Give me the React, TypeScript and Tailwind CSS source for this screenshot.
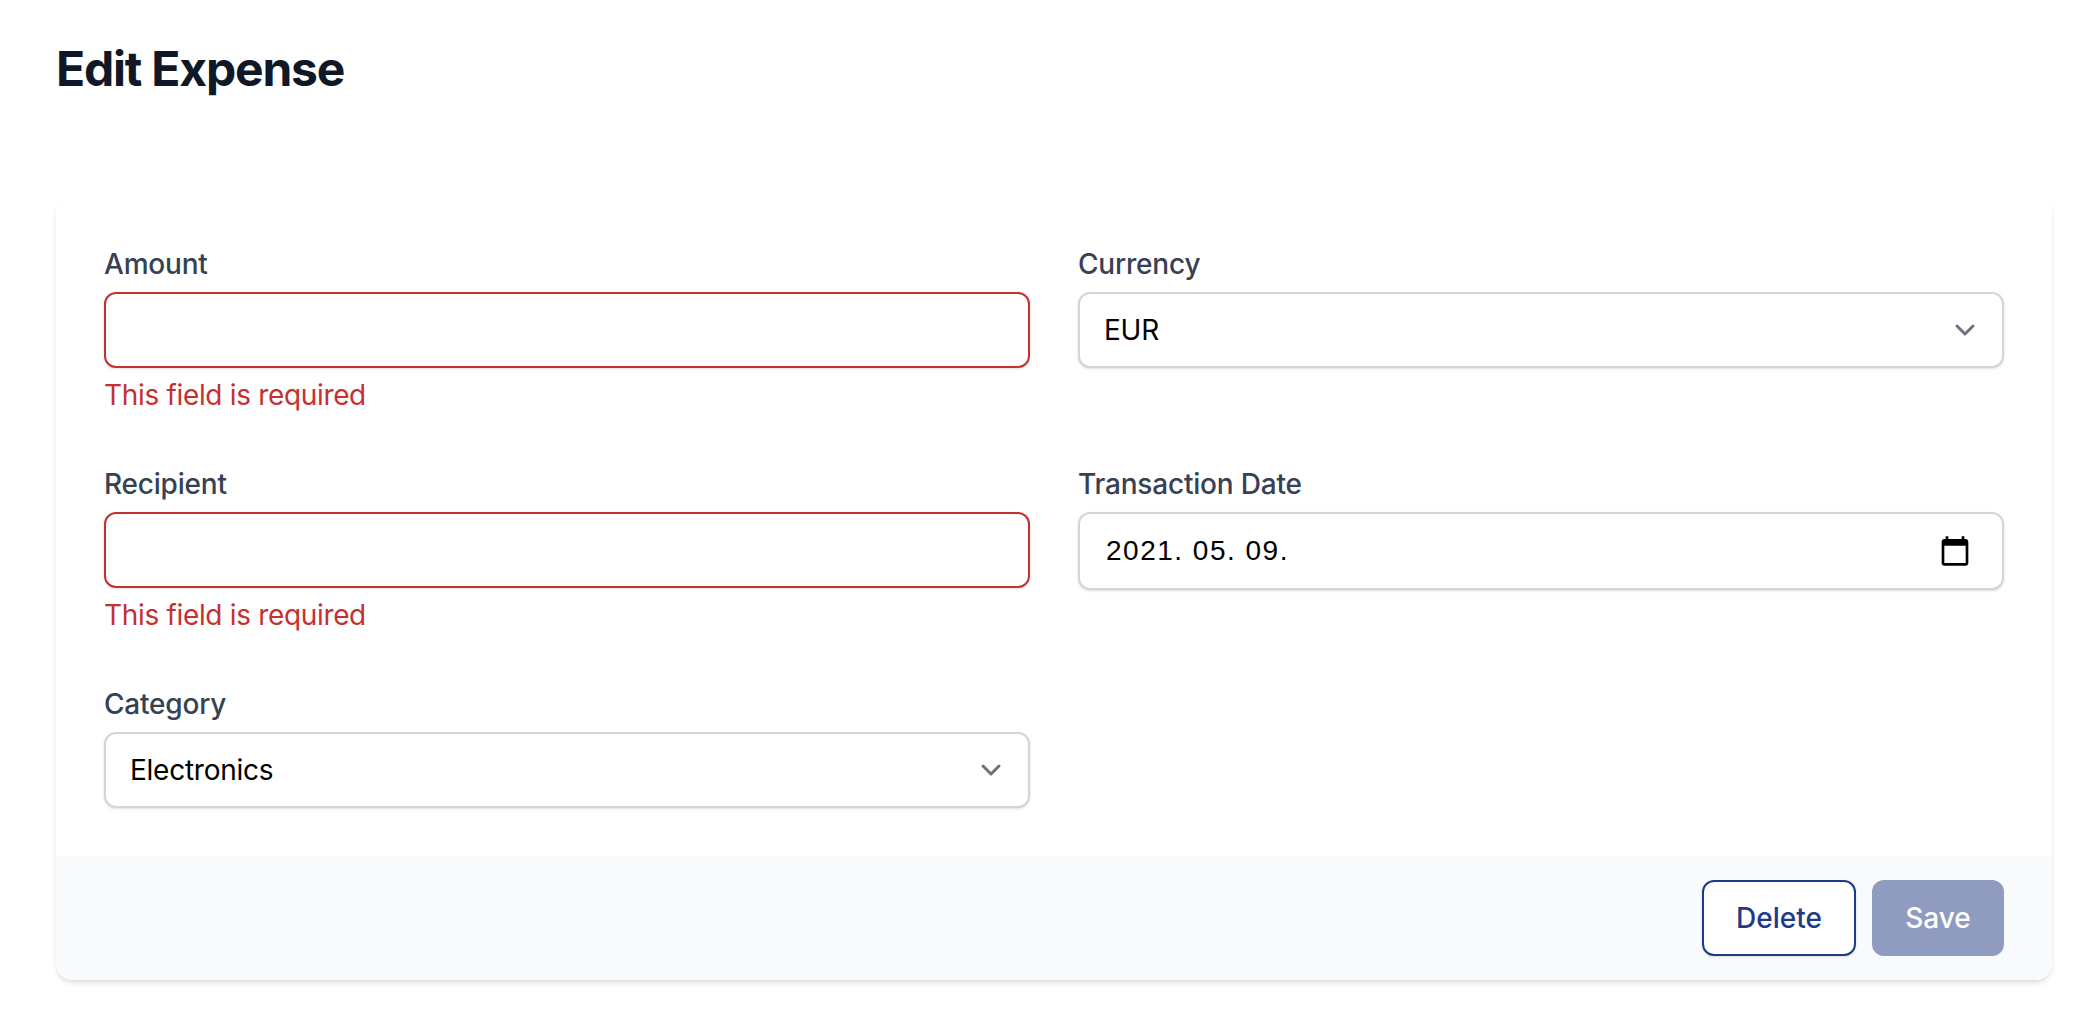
const inter = { fontFamily: 'Inter, sans-serif' };

function Chevron() {
  return (
    <svg className="w-10 h-10 text-gray-500" viewBox="0 0 20 20" fill="none">
      <path d="M6 8l4 4 4-4" stroke="currentColor" strokeWidth="1.5" strokeLinecap="round" strokeLinejoin="round" />
    </svg>
  );
}

function CalendarIcon() {
  return (
    <svg className="w-8 h-8 text-black" viewBox="0 0 24 24" fill="currentColor">
      <path d="M20 3h-1V1h-2v2H7V1H5v2H4c-1.1 0-2 .9-2 2v16c0 1.1.9 2 2 2h16c1.1 0 2-.9 2-2V5c0-1.1-.9-2-2-2zm0 18H4V8h16v13z" />
    </svg>
  );
}

function Field({ label, error, children }: { label: string; error?: boolean; children: React.ReactNode }) {
  return (
    <div>
      <label className="block text-[28px] leading-[40px] font-medium tracking-[-0.2px] text-gray-700">{label}</label>
      <div className="mt-2">{children}</div>
      {error && (
        <p className="mt-[7px] mb-[1px] text-[28px] leading-[40px] tracking-[-0.33px] text-[#c53030]">
          This field is required
        </p>
      )}
    </div>
  );
}

function TextInput({ error }: { error?: boolean }) {
  return (
    <input
      type="text"
      className={`block w-full h-[76px] rounded-xl border-2 bg-white px-6 shadow-sm ${error ? 'border-[#c53030]' : 'border-gray-300'}`}
    />
  );
}

function SelectBox({ value }: { value: string }) {
  return (
    <div className="flex items-center justify-between h-[76px] rounded-xl border-2 border-gray-300 bg-white pl-6 pr-[17px] shadow-sm">
      <span className="text-[28px] tracking-[-0.25px] text-black">{value}</span>
      <Chevron />
    </div>
  );
}

export default function App() {
  return (
    <main className="min-h-[1030px] bg-white pl-14 pr-12 pt-[41px]" style={inter}>
      <h1 className="text-[48px] leading-[56px] font-bold tracking-tight text-gray-900">Edit Expense</h1>

      <div className="mt-[99px] rounded-2xl bg-white shadow-md overflow-hidden">
        <div className="grid grid-cols-2 gap-x-12 gap-y-12 p-12">
          <Field label="Amount" error>
            <TextInput error />
          </Field>
          <Field label="Currency">
            <SelectBox value="EUR" />
          </Field>
          <Field label="Recipient" error>
            <TextInput error />
          </Field>
          <Field label="Transaction Date">
            <div className="flex items-center justify-between h-[78px] rounded-xl border-2 border-gray-300 bg-white pl-[26px] pr-[31px] shadow-sm">
              <span className="text-[28px] tracking-[1.5px] text-black" style={{ fontFamily: '"Liberation Sans", sans-serif' }}>
                2021. 05. 09.
              </span>
              <CalendarIcon />
            </div>
          </Field>
          <Field label="Category">
            <SelectBox value="Electronics" />
          </Field>
        </div>

        {/* Footer */}
        <div className="flex justify-end gap-4 bg-gray-50 px-12 py-6">
          <button className="h-[76px] w-[154px] rounded-xl border-2 border-[#1e3a8a] bg-white text-[28px] font-medium text-[#1e3a8a] shadow-sm">
            Delete
          </button>
          <button className="h-[76px] w-[132px] rounded-xl bg-[#8f9bbf] text-[28px] font-medium text-white">
            Save
          </button>
        </div>
      </div>
    </main>
  );
}
